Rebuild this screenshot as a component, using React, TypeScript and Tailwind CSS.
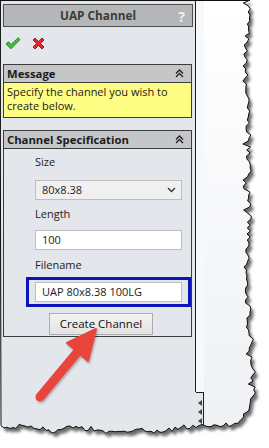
import React from 'react';

// seeded noise so the torn edge looks the same every render
function rng(seed: number) {
  let s = seed;
  return () => {
    s = (s * 16807) % 2147483647;
    return (s - 1) / 2147483646;
  };
}

function lerpKeys(keys: [number, number][], t: number) {
  for (let i = 0; i < keys.length - 1; i++) {
    const [a0, b0] = keys[i];
    const [a1, b1] = keys[i + 1];
    if ((t >= a0 && t <= a1) || (t <= a0 && t >= a1)) {
      const f = a1 === a0 ? 0 : (t - a0) / (a1 - a0);
      return b0 + (b1 - b0) * f;
    }
  }
  return keys[keys.length - 1][1];
}

function tornPath() {
  const r = rng(7);
  const pts: string[] = ['M0,0', 'L250,0'];
  const right: [number, number][] = [
    [0, 250], [60, 245], [120, 248], [200, 250], [280, 246], [340, 251], [390, 254], [410, 248], [424, 240],
  ];
  for (let y = 3; y <= 422; y += 3) {
    let x = lerpKeys(right, y) + (r() - 0.5) * 5;
    if (r() > 0.9) x -= 4;
    pts.push(`L${x.toFixed(1)},${y}`);
  }
  const bottom: [number, number][] = [
    [240, 424], [200, 425], [160, 431], [120, 430], [80, 428], [40, 429], [0, 425],
  ];
  for (let x = 238; x >= 0; x -= 3) {
    let y = lerpKeys(bottom, x) + (r() - 0.5) * 5;
    if (r() > 0.9) y += 3;
    pts.push(`L${x},${y.toFixed(1)}`);
  }
  pts.push('Z');
  return pts.join(' ');
}

const TORN = tornPath();

function TornEdge() {
  return (
    <svg className="absolute inset-0 pointer-events-none" width="269" height="448" viewBox="0 0 269 448">
      <defs>
        <clipPath id="outside">
          <path clipRule="evenodd" d={`M-10,-10 H280 V460 H-10 Z ${TORN}`} />
        </clipPath>
        <filter id="blur" x="-10%" y="-10%" width="120%" height="120%">
          <feGaussianBlur stdDeviation="1.6" />
        </filter>
      </defs>
      <path fillRule="evenodd" fill="#ffffff" d={`M-10,-10 H280 V460 H-10 Z ${TORN}`} />
      <g clipPath="url(#outside)">
        <path d={TORN} fill="#3a3a3a" opacity="0.75" transform="translate(3,4)" filter="url(#blur)" />
      </g>
      <path d={TORN} fill="none" stroke="#111" strokeWidth="1" />
    </svg>
  );
}

function RedArrow() {
  return (
    <svg className="absolute inset-0 pointer-events-none" width="269" height="448" viewBox="0 0 269 448">
      <defs>
        <filter id="ash" x="-20%" y="-20%" width="140%" height="140%">
          <feDropShadow dx="1" dy="1.5" stdDeviation="1.2" floodColor="#000" floodOpacity="0.3" />
        </filter>
      </defs>
      <g filter="url(#ash)">
        <line x1="40" y1="397" x2="80" y2="349" stroke="#e8443d" strokeWidth="9" strokeLinecap="round" />
        <polygon points="96,329 88,361 67,343" fill="#e8443d" stroke="#e8443d" strokeWidth="2" strokeLinejoin="round" />
      </g>
    </svg>
  );
}

function CheckIcon() {
  return (
    <svg width="16" height="13" viewBox="0 0 16 13">
      <path d="M1,7 L3.5,4.8 L6,7.5 L13.2,0.8 L15,2.6 L6,11.8 Z" fill="#3fc23a" stroke="#1d7d1c" strokeWidth="0.9" strokeLinejoin="round" />
    </svg>
  );
}

function CrossIcon() {
  return (
    <svg width="13" height="13" viewBox="0 0 13 13">
      <path
        d="M1,3 L3,1 L6.5,4.5 L10,1 L12,3 L8.5,6.5 L12,10 L10,12 L6.5,8.5 L3,12 L1,10 L4.5,6.5 Z"
        fill="#e0262b"
        stroke="#8e1216"
        strokeWidth="0.9"
        strokeLinejoin="round"
      />
    </svg>
  );
}

function Collapse() {
  return (
    <svg width="9" height="9" viewBox="0 0 9 9">
      <path d="M1,4.5 L4.5,1 L8,4.5 M1,8 L4.5,4.5 L8,8" fill="none" stroke="#222" strokeWidth="1.3" />
    </svg>
  );
}

function GroupHeader({ title }: { title: string }) {
  return (
    <div className="flex h-[18px] items-center justify-between border-b border-[#3c3c3c] bg-[#c5c6c8] pl-[3px] pr-[7px]">
      <span className="text-[11.3px] font-bold leading-none text-[#1c1c1c]">{title}</span>
      <Collapse />
    </div>
  );
}

function Field({ value }: { value: string }) {
  return (
    <div className="flex h-[20px] w-[147px] items-center border border-[#bdbdbd] bg-white px-[6px] text-[11px] text-[#1a1a1a]">
      {value}
    </div>
  );
}

export default function App() {
  return (
    <div className="relative h-[448px] w-[269px] overflow-hidden bg-white font-['Open_Sans',sans-serif] text-[11px] text-black">
      <div className="flex h-full border-t border-[#111]">
        <div className="flex w-[204px] flex-col">
          <div className="flex h-[391px]">
            {/* property manager panel */}
            <div className="flex w-[196px] flex-col border-l border-r border-[#1e1e1e] bg-[#e3e6ea] pl-[2px] pr-[2px] pt-[3px]">
              <div className="relative flex h-[23px] items-center justify-center border border-[#4d4d4d] bg-[#b5b6b7]">
                <span className="text-[11.8px] font-bold text-[#3b3b3b]">UAP Channel</span>
                <span className="absolute right-[7px] top-[1px] text-[14px] font-bold text-[#f2f2f2]">?</span>
              </div>

              <div className="flex h-[26px] items-center gap-[11px] pl-[2px] pt-[6px]">
                <CheckIcon />
                <CrossIcon />
              </div>

              <div className="mt-[11px] mr-[1px] border border-[#3c3c3c]">
                <GroupHeader title="Message" />
                <div className="h-[34px] bg-[#fdfd84] pl-[3px] pt-[2px] text-[11px] leading-[14px] text-[#1a1a1a]">
                  Specify the channel you wish to
                  <br />
                  create below.
                </div>
              </div>

              <div className="mt-[12px] mr-[1px] border border-[#3c3c3c]">
                <GroupHeader title="Channel Specification" />
                <div className="flex h-[187px] flex-col pl-[31px] text-[11px] text-[#222]">
                  <div className="mt-[5px] h-[16px] leading-[16px]">Size</div>
                  <div className="mt-[10px] flex h-[20px] w-[147px] items-center justify-between border border-[#bdbdbd] bg-[#f0f0f0] pl-[6px] pr-[5px]">
                    <span>80x8.38</span>
                    <svg width="9" height="6" viewBox="0 0 9 6">
                      <path d="M1,1 L4.5,4.5 L8,1" fill="none" stroke="#333" strokeWidth="1.3" />
                    </svg>
                  </div>
                  <div className="mt-[6px] h-[16px] leading-[16px]">Length</div>
                  <div className="mt-[8px]">
                    <Field value="100" />
                  </div>
                  <div className="mt-[7px] h-[16px] leading-[16px]">Filename</div>
                  <div className="-ml-[9px] mt-[4px] w-[165px] border-[3px] border-[#0a14b8] py-[2px] pl-[6px]">
                    <Field value="UAP 80x8.38 100LG" />
                  </div>
                  <div className="ml-[14px] mt-[6px] flex h-[22px] w-[104px] items-center justify-center border border-[#acacac] bg-gradient-to-b from-[#f3f3f3] to-[#e3e3e3] text-[11.5px] text-[#111]">
                    Create Channel
                  </div>
                </div>
              </div>
            </div>
            <div className="flex-1 bg-[#f7f8fa]" />
          </div>
          <div className="flex flex-1">
            <div className="w-[196px] border-l border-[#1e1e1e] bg-[#e3e6ea]" />
            <div className="flex w-[8px] flex-col items-end gap-[3px] border-r border-t border-[#1e1e1e] bg-[#e3e6ea] pt-[7px] pr-[1px]">
              {[0, 1, 2].map((i) => (
                <svg key={i} width="4" height="6" viewBox="0 0 4 6">
                  <path d="M4,0 L0,3 L4,6 Z" fill="#444" />
                </svg>
              ))}
            </div>
          </div>
        </div>
        <div className="flex-1 bg-gradient-to-b from-[#ffffff] to-[#eef0f3]" />
      </div>
      <RedArrow />
      <TornEdge />
    </div>
  );
}
